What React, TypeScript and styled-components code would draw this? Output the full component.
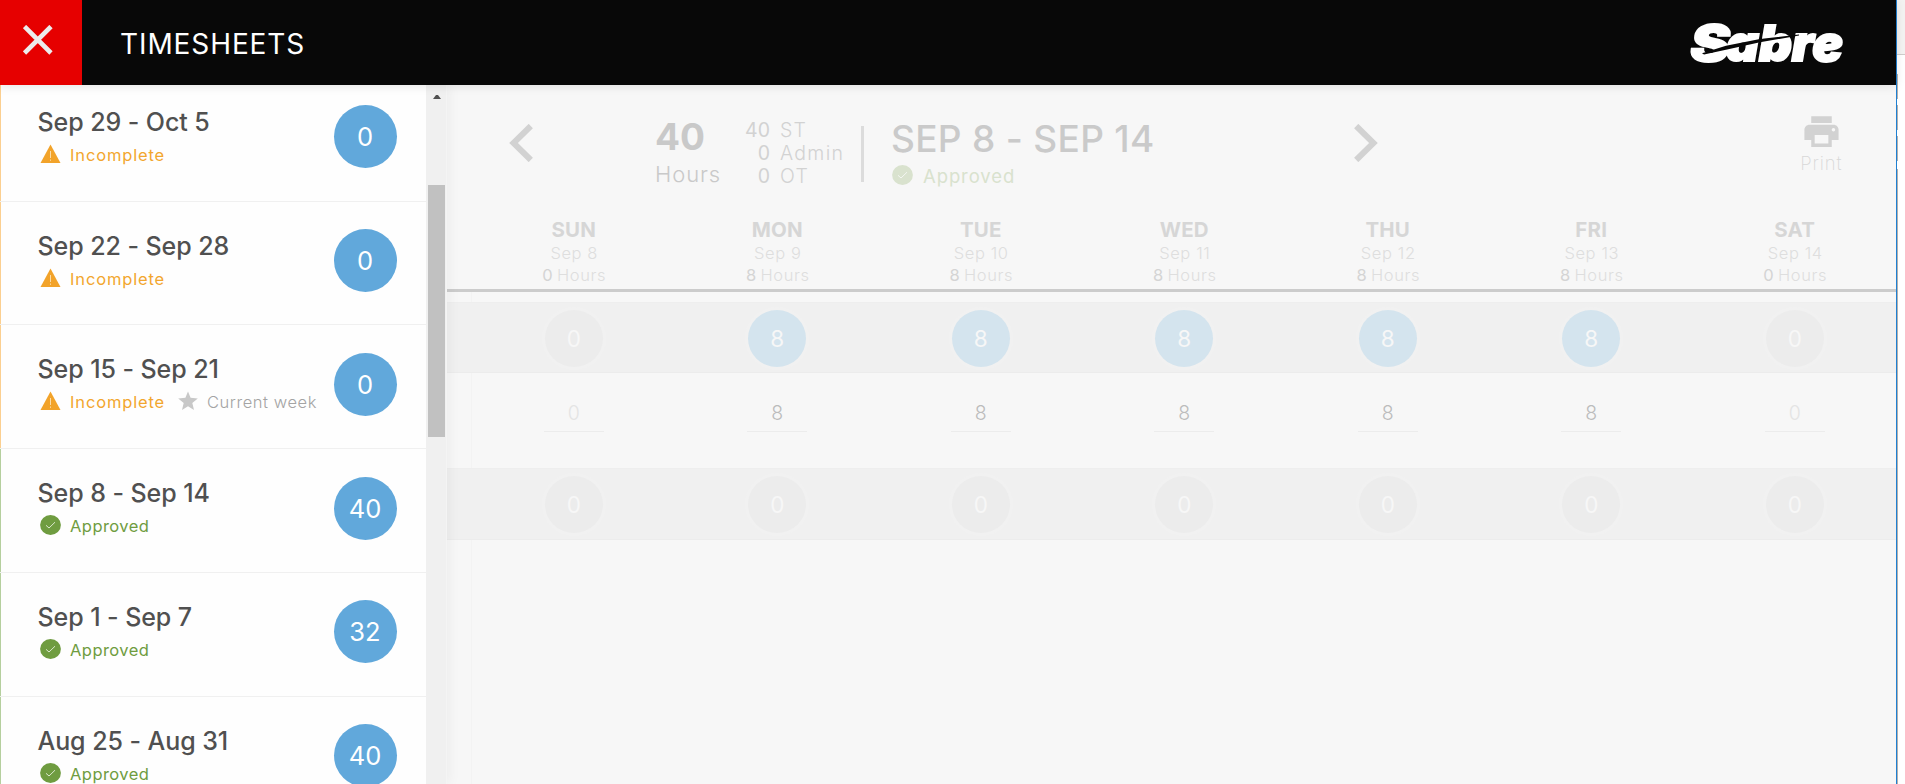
import React from "react";
import styled, { createGlobalStyle } from "styled-components";

const Global = createGlobalStyle`
  * { box-sizing: border-box; }
  body { margin: 0; background: #fff; font-family: Inter, "Liberation Sans", sans-serif; overflow: hidden; }
`;

const Screen = styled.div`display: flex; height: 784px; overflow: hidden;`;
const Window = styled.div`width: 1896px; flex: none; display: flex; flex-direction: column;`;
const Header = styled.header`
  height: 85px; flex: none; background: #080808; display: flex; align-items: center;
  position: relative; z-index: 2; box-shadow: 0 1px 10px rgba(0, 0, 0, 0.1);
`;
const CloseButton = styled.button`
  width: 82px; height: 85px; border: 0; background: #e60000; padding: 25px 0 0 23px; display: flex;
`;
const AppTitle = styled.h1`
  margin: 3px 0 0 38px; flex: 1; color: #fff; font-size: 28px; font-weight: 400; line-height: 34px; letter-spacing: 0.9px;
`;
const Logo = styled.svg`width: 170px; height: 70px; margin-right: 46px; display: block; overflow: visible;`;

const Body = styled.div`flex: 1; min-height: 0; display: flex; background: #f7f7f7;`;
const Sidebar = styled.aside`
  width: 447px; flex: none; display: flex; overflow: hidden; background: #fefefe;
  border-right: 1px solid #f4f4f4; position: relative; z-index: 1; box-shadow: 2px 0 12px rgba(0, 0, 0, 0.05);
`;
const WeekList = styled.div`width: 426px; flex: none; margin-top: -7.25px;`;
const WeekRow = styled.div<{ $edge: string }>`
  height: 123.75px; border-bottom: 1px solid #f0f0f0; box-shadow: inset 1px 0 0 ${(p) => p.$edge};
  padding: 27.5px 29.5px 0 37.5px; display: flex; justify-content: space-between;
`;
const WeekInfo = styled.div`padding-top: 1.5px;`;
const WeekTitle = styled.div`
  font-size: 25px; line-height: 30px; font-weight: 500; letter-spacing: -0.07px; color: #505050; white-space: nowrap;
`;
const StatusLine = styled.div`display: flex; margin-top: 5px; align-items: center; height: 24px; padding-left: 2.5px;`;
const StatusText = styled.span<{ $color: string; $ls: number; $light?: boolean }>`
  font-size: 16.5px; line-height: 24px; letter-spacing: ${(p) => p.$ls}px; color: ${(p) => p.$color};
  font-weight: ${(p) => (p.$light ? 300 : 400)}; margin-left: 9px; padding-top: 2px; white-space: nowrap;
`;
const StarSlot = styled.span`display: flex; margin-left: 13px;`;
const WeekTotal = styled.div`
  width: 63px; height: 63px; flex: none; border-radius: 50%; background: #61a8db; color: #fff;
  font-size: 25.5px; line-height: 64px; text-align: center;
`;
const Scrollbar = styled.div`width: 20px; background: #f0f0f0; padding: 10px 1px 0 2px; display: flex; flex-direction: column;`;
const ScrollThumb = styled.div`height: 252px; margin-top: 86px; background: #c1c1c1;`;

const Main = styled.main`flex: 1; display: flex; flex-direction: column;`;
const Summary = styled.section`height: 129px; flex: none; display: flex; align-items: flex-start;`;
const PrevSlot = styled.div`margin: 39px 0 0 62px; width: 146px; height: 38px;`;
const Total = styled.div`width: 90px; color: #c9c9c9;`;
const TotalValue = styled.div`margin-top: 29px; font-size: 37px; font-weight: 700; line-height: 46px;`;
const TotalLabel = styled.div`margin-top: 1px; font-size: 22px; line-height: 26px; font-weight: 300; letter-spacing: 0.9px;`;
const Breakdown = styled.dl`
  margin: 34px 0 0; width: 116px; display: grid; grid-template-columns: 25px 1fr; column-gap: 10px; color: #d2d2d2;
  font-size: 19.5px; line-height: 23px;
`;
const BreakdownValue = styled.dt`text-align: right; font-weight: 400;`;
const BreakdownName = styled.dd`margin: 0; font-weight: 300; letter-spacing: 1.3px;`;
const Divider = styled.div`width: 3px; height: 56px; margin-top: 41px; background: #dcdcdc;`;
const Period = styled.div`margin-left: 27px; width: 463px;`;
const PeriodTitle = styled.h2`
  margin: 31px 0 0; font-size: 37px; line-height: 46px; font-weight: 500; letter-spacing: 0.3px; color: #cacaca;
`;
const PeriodStatus = styled.div`display: flex; align-items: center; margin: -1px 0 0 1px;`;
const PeriodStatusText = styled.span`
  margin: 3px 0 0 10px; font-size: 18.5px; line-height: 24px; font-weight: 400; letter-spacing: 0.9px; color: #d9e2ce;
`;
const NextSlot = styled.div`margin-top: 39px; height: 38px;`;
const PrintButton = styled.div`
  margin: 26px 54px 0 auto; display: flex; flex-direction: column; align-items: center; color: #d8d8d8;
  font-size: 18.5px; line-height: 24px; font-weight: 200; letter-spacing: 0.9px;
`;
const PrintLabel = styled.span`margin-top: -1px;`;

const WeekGrid = styled.div`
  display: grid; grid-template-columns: repeat(7, 203.5px); margin-left: 25px; justify-items: center;
`;
const DayHead = styled(WeekGrid)`height: 75px; flex: none;`;
const Day = styled.div`text-align: center; font-size: 16.5px; letter-spacing: 0.6px; font-weight: 300; color: #dedede;`;
const DayName = styled.div`
  margin-top: 5px; font-size: 20.5px; line-height: 22px; font-weight: 700; letter-spacing: 0.2px; color: #d6d6d6;
`;
const DayDate = styled.div`margin-top: 1px; line-height: 22px; padding-left: 1px;`;
const DayHours = styled.div`
  line-height: 22px; word-spacing: -1.5px; padding-left: 1px;
  b { font-weight: 400; color: #d4d4d4; }
`;
const Rule = styled.div`height: 3px; background: #cccccc; flex: none;`;
const Gutter = styled.div<{ $h: number }>`
  height: ${(p) => p.$h}px; flex: none; margin-left: 24px; border-left: 1px solid #f3f3f3;
`;
const Band = styled.div<{ $h: number }>`
  height: ${(p) => p.$h}px; flex: none; background: #f0f0f0; border-top: 1px solid #eeeeee; border-bottom: 1px solid #ececec;
  padding-top: 7px;
`;
const Bubble = styled.div<{ $on: boolean }>`
  width: 58px; height: 57px; border-radius: 50%; background: ${(p) => (p.$on ? "#d4e4ee" : "#ececec")};
  box-shadow: 0 0 0 3px #f1f1f1; color: #f7f7f7; font-size: 22.5px; line-height: 58px; text-align: center;
`;
const InputRow = styled(WeekGrid)`margin-left: 0; padding-top: 26px;`;
const HourInput = styled.div<{ $on: boolean }>`
  width: 60px; height: 33px; border-bottom: 1px solid #ececec; text-align: center; font-size: 19.5px; line-height: 29px;
  font-weight: 300; color: ${(p) => (p.$on ? "#bcbcbc" : "#e4e4e4")};
`;

const Backdrop = styled.div`flex: 1; border-left: 1px solid #1f80d2; display: flex; flex-direction: column; background: #fff;`;
const BackdropBar = styled.div`height: 55px; background: #f3f2f1; border-bottom: 1px solid #cfcdcb; margin-bottom: 19px;`;
const BackdropEdge = styled.div<{ $h: number; $gap: number }>`
  width: 1px; height: ${(p) => p.$h}px; margin-bottom: ${(p) => p.$gap}px; background: #b3b0ad;
`;

type Status = "incomplete" | "approved";
const tone = {
  incomplete: { edge: "#fbcf90", color: "#f2a62e", label: "Incomplete", ls: 0.85 },
  approved: { edge: "#b5cf9e", color: "#6f9c40", label: "Approved", ls: 0.45 },
};
const weeks: { range: string; status: Status; total: number; current?: boolean }[] = [
  { range: "Sep 29 - Oct 5", status: "incomplete", total: 0 },
  { range: "Sep 22 - Sep 28", status: "incomplete", total: 0 },
  { range: "Sep 15 - Sep 21", status: "incomplete", total: 0, current: true },
  { range: "Sep 8 - Sep 14", status: "approved", total: 40 },
  { range: "Sep 1 - Sep 7", status: "approved", total: 32 },
  { range: "Aug 25 - Aug 31", status: "approved", total: 40 },
];
const days: [string, string, number][] = [
  ["SUN", "Sep 8", 0], ["MON", "Sep 9", 8], ["TUE", "Sep 10", 8], ["WED", "Sep 11", 8],
  ["THU", "Sep 12", 8], ["FRI", "Sep 13", 8], ["SAT", "Sep 14", 0],
];
const breakdown: [number, string][] = [[40, "ST"], [0, "Admin"], [0, "OT"]];

const Warning = () => (
  <svg width="21" height="20" viewBox="0 0 21 20">
    <path d="M10.5 0.5 L20.5 19 H0.5 Z" fill="#f2a32a" />
    <path d="M10.5 7 V14 M10.5 15.5 V16.8" stroke="#fbdca8" strokeWidth="1" />
  </svg>
);
const Check = ({ fill, mark }: { fill: string; mark: string }) => (
  <svg width="21" height="20" viewBox="0 0 21 20">
    <ellipse cx="10.5" cy="10" rx="10.4" ry="10" fill={fill} />
    <path d="M6 10.3 L9 13 L15 7.2" fill="none" stroke={mark} strokeWidth="1" />
  </svg>
);
const Star = () => (
  <svg width="20" height="20" viewBox="0 0 20 20">
    <path d="M10 0.5 L12.6 6.8 L19.8 7.4 L14.3 11.9 L16 19 L10 15.2 L4 19 L5.7 11.9 L0.2 7.4 L7.4 6.8 Z" fill="#c8c8c8" />
  </svg>
);
const Chevron = ({ flip }: { flip?: boolean }) => (
  <svg width="24" height="38" viewBox="0 0 24 38">
    <path d={flip ? "M2.2 2 L19.5 19 L2.2 36" : "M21.8 2 L4.5 19 L21.8 36"} fill="none" stroke="#d2d2d2" strokeWidth="6" />
  </svg>
);
const SabreLogo = () => (
  <Logo viewBox="0 0 170 70">
    <g fontFamily="Inter" fontWeight="900" fontStyle="italic" fontSize="49" fill="#fff" stroke="#fff" strokeWidth="2">
      <text x="10.5" y="52.5" textLength="39" lengthAdjust="spacingAndGlyphs">S</text>
      <text x="46" y="52.5" textLength="117" lengthAdjust="spacingAndGlyphs">abre</text>
    </g>
    <path d="M22 45.2 L46 37.8 L80 31 L119 26.5 L119 27.6 L80 34.2 L46 41.8 L24 46.6 Z" fill="#080808" />
  </Logo>
);

export default function App() {
  return (
    <Screen>
      <Global />
      <Window>
        <Header>
          <CloseButton aria-label="Close">
            <svg width="30" height="30" viewBox="0 0 30 30">
              <path d="M1.5 1.5 L28 28 M28 1.5 L1.5 28" stroke="#ececec" strokeWidth="4.6" />
            </svg>
          </CloseButton>
          <AppTitle>TIMESHEETS</AppTitle>
          <SabreLogo />
        </Header>
        <Body>
          <Sidebar>
            <WeekList>
              {weeks.map((w) => {
                const t = tone[w.status];
                return (
                  <WeekRow key={w.range} $edge={t.edge}>
                    <WeekInfo>
                      <WeekTitle>{w.range}</WeekTitle>
                      <StatusLine>
                        {w.status === "approved" ? <Check fill={t.color} mark="#dbe8cd" /> : <Warning />}
                        <StatusText $color={t.color} $ls={t.ls}>{t.label}</StatusText>
                        {w.current && (
                          <>
                            <StarSlot><Star /></StarSlot>
                            <StatusText $color="#a4a4a4" $ls={0.55} $light>Current week</StatusText>
                          </>
                        )}
                      </StatusLine>
                    </WeekInfo>
                    <WeekTotal>{w.total}</WeekTotal>
                  </WeekRow>
                );
              })}
            </WeekList>
            <Scrollbar>
              <svg width="17" height="4" viewBox="0 0 17 4"><path d="M8 0 H10 L13 4 H5 Z" fill="#505050" /></svg>
              <ScrollThumb />
            </Scrollbar>
          </Sidebar>
          <Main>
            <Summary>
              <PrevSlot><Chevron /></PrevSlot>
              <Total>
                <TotalValue>40</TotalValue>
                <TotalLabel>Hours</TotalLabel>
              </Total>
              <Breakdown>
                {breakdown.map(([n, name]) => (
                  <React.Fragment key={name}>
                    <BreakdownValue>{n}</BreakdownValue>
                    <BreakdownName>{name}</BreakdownName>
                  </React.Fragment>
                ))}
              </Breakdown>
              <Divider />
              <Period>
                <PeriodTitle>SEP 8 - SEP 14</PeriodTitle>
                <PeriodStatus>
                  <Check fill="#d9e2ce" mark="#f4f6f2" />
                  <PeriodStatusText>Approved</PeriodStatusText>
                </PeriodStatus>
              </Period>
              <NextSlot><Chevron flip /></NextSlot>
              <PrintButton>
                <svg width="41" height="41" viewBox="0 0 24 24" fill="#d2d2d2">
                  <path d="M19 8H5c-1.66 0-3 1.34-3 3v6h4v4h12v-4h4v-6c0-1.66-1.34-3-3-3zm-3 11H8v-5h8v5zm3-7c-.55 0-1-.45-1-1s.45-1 1-1 1 .45 1 1-.45 1-1 1zm-1-9H6v4h12V3z" />
                </svg>
                <PrintLabel>Print</PrintLabel>
              </PrintButton>
            </Summary>
            <DayHead>
              {days.map(([name, date, h]) => (
                <Day key={name}>
                  <DayName>{name}</DayName>
                  <DayDate>{date}</DayDate>
                  <DayHours><b>{h}</b> Hours</DayHours>
                </Day>
              ))}
            </DayHead>
            <Rule />
            <Gutter $h={10} />
            <Band $h={71}>
              <WeekGrid>
                {days.map(([name, , h]) => <Bubble key={name} $on={h > 0}>{h}</Bubble>)}
              </WeekGrid>
            </Band>
            <Gutter $h={95}>
              <InputRow>
                {days.map(([name, , h]) => <HourInput key={name} $on={h > 0}>{h}</HourInput>)}
              </InputRow>
            </Gutter>
            <Band $h={72}>
              <WeekGrid>
                {days.map(([name]) => <Bubble key={name} $on={false}>0</Bubble>)}
              </WeekGrid>
            </Band>
            <Gutter $h={244} />
          </Main>
        </Body>
      </Window>
      <Backdrop>
        <BackdropBar />
        <BackdropEdge $h={25} $gap={6} />
        <BackdropEdge $h={25} $gap={6} />
        <BackdropEdge $h={25} $gap={8} />
        <BackdropEdge $h={615} $gap={0} />
      </Backdrop>
    </Screen>
  );
}
